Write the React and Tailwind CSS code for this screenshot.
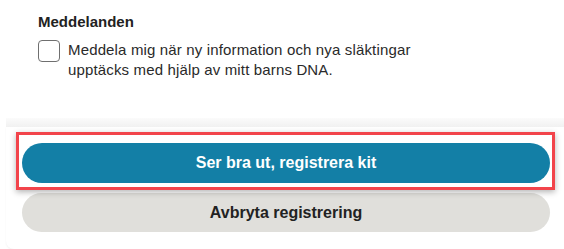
export default function App() {
  return (
    <div className="w-[564px] h-[249px] bg-white overflow-hidden font-['Liberation_Sans',Arial,sans-serif] text-[#222]">
      {/* Notifications section */}
      <div className="h-[118px] pt-3 pl-[38px]">
        <h3 className="text-[15px] leading-[20px] font-bold">Meddelanden</h3>
        <label className="mt-2 flex items-start gap-2">
          <span className="mt-0 w-[22px] h-[22px] shrink-0 rounded-[4px] border border-[#6f6f6f] bg-white" />
          <span className="max-w-[360px] text-[15px] leading-[20px] tracking-[0.15px] text-[#2a2a2a]">
            Meddela mig när ny information och nya släktingar upptäcks med hjälp av mitt barns DNA.
          </span>
        </label>
      </div>

      {/* footer shadow strip */}
      <div className="ml-[6px] h-[9px] bg-gradient-to-b from-[#fbfbfb] to-[#f1f1f1]" />

      {/* footer */}
      <div className="relative ml-[6px] h-[122px] rounded-bl-[8px] bg-white shadow-[0_1px_2px_rgba(0,0,0,0.06)] pt-4 pl-4 pr-[14px]">
        <div className="absolute left-[10px] top-[5px] w-[539px] h-[58px] border-[3px] border-[#f2444b] shadow-[0_2px_6px_rgba(0,0,0,0.3)] pointer-events-none" />
        <div className="flex flex-col gap-[10px]">
          <button className="h-[40px] w-full rounded-full bg-[#137fa6] text-white text-[16px] font-bold">
            Ser bra ut, registrera kit
          </button>
          <button className="h-[39px] w-full rounded-full bg-[#e0dfdb] text-[#222] text-[16px] font-bold">
            Avbryta registrering
          </button>
        </div>
      </div>
    </div>
  )
}
